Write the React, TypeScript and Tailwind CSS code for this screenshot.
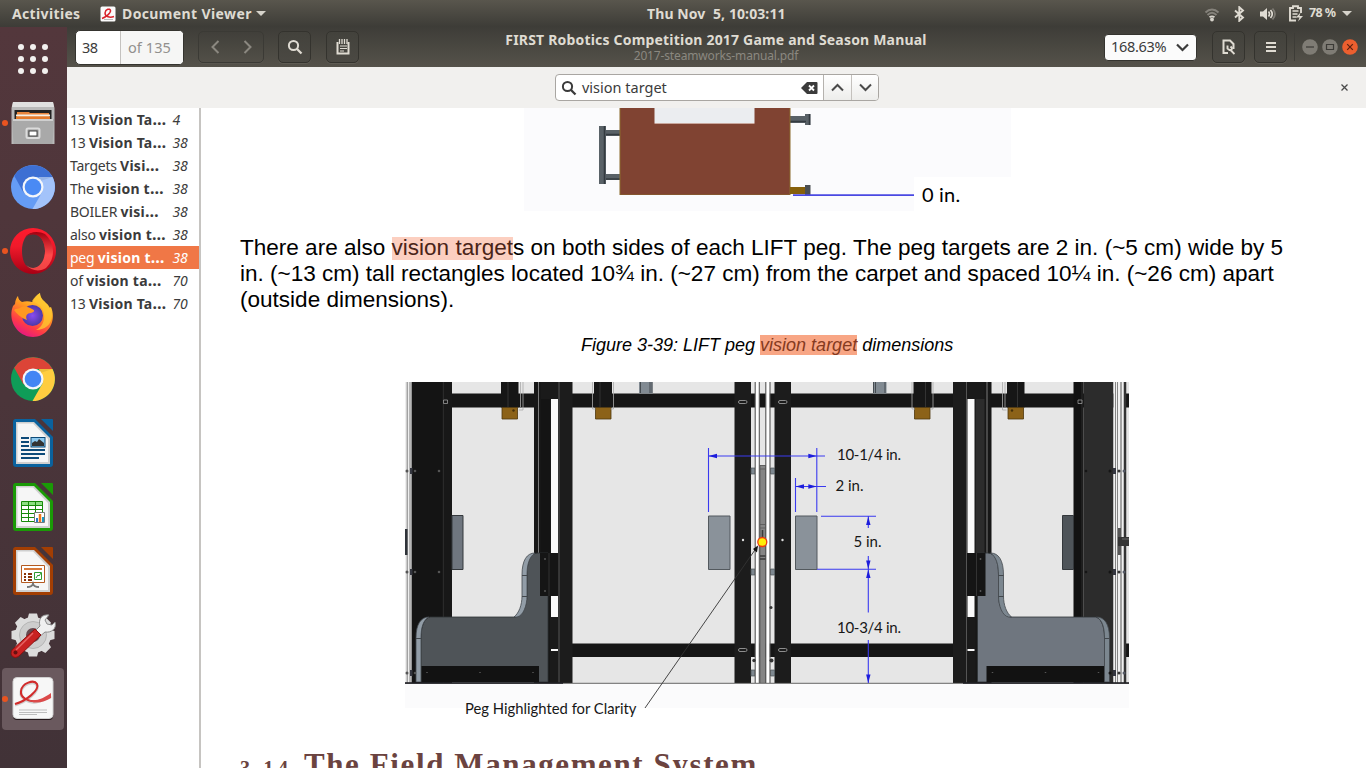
import React from "react";

const UI = "font-['Noto_Sans','Open_Sans',sans-serif]";

function Caret() {
  return (
    <svg width="10" height="5" viewBox="0 0 10 5">
      <path d="M0 0h10L5 5z" fill="#d6d3cb" />
    </svg>
  );
}

function Swirl() {
  return (
    <g fill="none">
      <path d="M3 28C14 25 28 14 25 8 22 3 10 7 9 15c-1 7 8 11 15 10 6-1 10-3 15-6" stroke="#cfcfcf" strokeWidth="3" />
      <path d="M3 27C14 24 28 13 25 7 22 2 10 6 9 14c-1 7 8 11 15 10" stroke="#d22b2b" strokeWidth="2" />
      <path d="M14 21c7 5 17 1 25-5v5c-8 5-19 7-25 0z" fill="#dc4a4a" />
    </g>
  );
}

function TopBar() {
  return (
    <div className="flex h-[27px] shrink-0 items-center bg-linear-to-b from-[#59564d] to-[#3d3c37] text-[14px] font-bold text-[#dfdbd2]">
      <div className="w-[100px] pl-3 tracking-[0.350px]">Activities</div>
      <svg width="16" height="16" viewBox="0 0 16 16">
        <rect x="0.5" y="0.5" width="15" height="15" rx="1.5" fill="#fbfbfb" />
        <path d="M2 12.500C6 11 11 7 10.500 4.500 10 2 5.500 3 5 7c0 4 5 5 9 3.500" fill="none" stroke="#d8222a" strokeWidth="1.500" />
        <path d="M4 13.500h9" stroke="#bbb" />
      </svg>
      <div className="w-[134px] pl-[6px] whitespace-nowrap tracking-[0.380px]">Document Viewer</div>
      <div className="pl-[6px]">
        <Caret />
      </div>
      <div className="flex-1 pl-[381px] whitespace-pre tracking-[0.100px]">Thu Nov  5, 10:03:11</div>
      <svg width="16" height="16" viewBox="0 0 16 16" className="mr-[11px]" fill="none" strokeWidth="1.900">
        <path d="M1.500 6.500c4-4 9-4 13 0" stroke="#85827b" />
        <path d="M3.500 9c3-3 6-3 9 0" stroke="#85827b" />
        <path d="M5.500 11.300c2-1.500 3-1.500 5 0" stroke="#d6d3cb" />
        <circle cx="8" cy="13.500" r="1.900" fill="#d6d3cb" />
      </svg>
      <svg width="16" height="16" viewBox="0 0 16 16" className="mr-3" fill="none" stroke="#dfdbd2" strokeWidth="1.900">
        <path d="M4 4.500l8 7L8.300 14.800V1.200L12 4.500 4 11.500" />
      </svg>
      <svg width="17" height="16" viewBox="0 0 17 16" className="mr-3" fill="none" strokeWidth="1.700">
        <path d="M1 5.500h3L8 2v12L4 10.500H1z" fill="#dfdbd2" />
        <path d="M9.500 5.500q2 2.500 0 5M11.500 4q3.500 4 0 8" stroke="#dfdbd2" />
        <path d="M13.500 2.500q5 5.500 0 11" stroke="#7d7a73" />
      </svg>
      <svg width="16" height="17" viewBox="0 0 16 17" className="mr-[5px]" fill="none" stroke="#dfdbd2" strokeWidth="1.900">
        <path d="M13 8V3H10V1.300H5V3H2v12.500h6" />
        <path d="M4.500 6h6M4.500 9h5M4.500 12h4" strokeWidth="1.600" />
        <path d="M12.500 7.500l-4.500 5h3.500L10 16.500l5-5.500h-3.500z" fill="#dfdbd2" stroke="none" />
      </svg>
      <div className="w-[33px] whitespace-nowrap text-[12.500px] tracking-[-0.6px]">78 %</div>
      <div className="mr-[14px]">
        <Caret />
      </div>
    </div>
  );
}

function FilesIcon() {
  return (
    <svg width="46" height="46" viewBox="0 0 46 46">
      <path d="M3 2h40l1.500 6v36h-43V8z" fill="#b9b9b9" />
      <path d="M3 2h40l1 5H2z" fill="#e0e0e0" />
      <path d="M4.500 10h37v10h-37z" fill="#222" />
      <path d="M7 12h12l1 1h19v6H7z" fill="#e8853c" />
      <path d="M6 14.500h34v2H6z" fill="#f4f0e6" />
      <path d="M6 16.500h34v3H6z" fill="#e37a2b" />
      <path d="M2 19h42l-1.500 25h-39z" fill="#a9a9a9" />
      <path d="M3 19h40v2H3z" fill="#cfcfcf" />
      <rect x="16.500" y="28.500" width="13" height="9.500" rx="1.500" fill="#999" stroke="#dcdcdc" strokeWidth="2" />
      <rect x="19" y="31" width="8" height="5" fill="#fff" stroke="#444" />
    </svg>
  );
}

function ChromeIcon({ a, b, c, mid }: { a: string; b: string; c: string; mid: string }) {
  return (
    <svg width="46" height="46" viewBox="0 0 46 46">
      <circle cx="23" cy="23" r="22" fill={b} />
      <path d="M4.200 11.700A22 22 0 0 1 42.500 13H23L13.500 28.500z" fill={a} />
      <path d="M42.500 13A22 22 0 0 1 22.500 45L32.500 27.500 29 13z" fill={c} />
      <path d="M29 13h13.500l-12 4z" fill="#000" opacity=".08" />
      <circle cx="23" cy="23" r="10.500" fill="#f4f6fa" />
      <circle cx="23" cy="23" r="8.300" fill={mid} />
    </svg>
  );
}

function OperaIcon() {
  return (
    <svg width="46" height="46" viewBox="0 0 46 46">
      <defs>
        <linearGradient id="op" x1="0" y1="0" x2="0" y2="1">
          <stop offset="0" stopColor="#ff1b2d" />
          <stop offset=".4" stopColor="#f01a2b" />
          <stop offset="1" stopColor="#a70014" />
        </linearGradient>
        <linearGradient id="op2" x1="0" y1="0" x2="0" y2="1">
          <stop offset="0" stopColor="#a20010" />
          <stop offset=".6" stopColor="#ff4b4b" />
          <stop offset="1" stopColor="#f04444" />
        </linearGradient>
      </defs>
      <path fillRule="evenodd" d="M23 0a23 23 0 1 0 0 46 23 23 0 0 0 0-46zm0 5c7 0 12 8 12 18s-5 18-12 18-11-8-11-18S16 5 23 5z" fill="url(#op)" />
      <path d="M15 9c5-6 14-6 20-3a23 23 0 0 1 1 34c-6 4-15 3-20-3 10 8 19-2 19-14S27 2 15 9z" fill="url(#op2)" />
    </svg>
  );
}

function FirefoxIcon() {
  return (
    <svg width="46" height="46" viewBox="0 0 46 46">
      <defs>
        <linearGradient id="ff" x1=".8" y1="0" x2=".3" y2="1">
          <stop offset="0" stopColor="#fff44f" />
          <stop offset=".4" stopColor="#ff9a1f" />
          <stop offset=".75" stopColor="#ff3b47" />
          <stop offset="1" stopColor="#e31587" />
        </linearGradient>
        <radialGradient id="ffc">
          <stop offset="0" stopColor="#8a4bf0" />
          <stop offset="1" stopColor="#4b39a8" />
        </radialGradient>
      </defs>
      <path d="M5 12c0-4 2-7 3-8 0 3 2 5 4 6 3-1 7-1 10 0 2-2 3-6 8-9 0 6 4 8 7 11 1 1 2 2 2 4l2-1c6 14-3 30-18 30C8 45-3 29 3 14z" fill="url(#ff)" />
      <circle cx="22.500" cy="23.500" r="10.500" fill="url(#ffc)" />
      <path d="M10 16c4-3 8-1 12 1 3 1 3 3-1 4-4 0-6 3-4 7-6-2-10-6-13-10 2-2 4-1 6-2z" fill="#ff9820" />
      <path d="M22 9c2-3 4-6 8-8 0 9 12 10 12 22 0 10-8 15-16 15 6-3 9-9 8-16-1-7-6-11-12-13z" fill="#ffc52f" opacity=".8" />
    </svg>
  );
}

function OfficeIcon({ color, children }: { color: string; children: React.ReactNode }) {
  return (
    <svg width="42" height="48" viewBox="0 0 42 48">
      <path d="M3 0h20l18 18v27a3 3 0 0 1-3 3H4a3 3 0 0 1-3-3V3a3 3 0 0 1 2-3z" fill={color} />
      <path d="M4 3h18l16 16v26H4z" fill="#cfcfcf" />
      <path d="M5.500 4.500H21L36 20v23H5.500z" fill="#f6f6f6" />
      <path d="M29 0h11q1 0 1 1v11z" fill={color} />
      {children}
    </svg>
  );
}

function SettingsIcon() {
  const teeth = [0, 45, 90, 135, 180, 225, 270, 315];
  return (
    <svg width="46" height="46" viewBox="0 0 46 46">
      {teeth.map((t) => (
        <path key={t} d="M17.500 7l1.500-5.500h8L28.500 7z" fill="#dcdcdc" transform={`rotate(${t} 23 23)`} />
      ))}
      <circle cx="23" cy="23" r="18" fill="#dcdcdc" />
      <circle cx="23" cy="23" r="13.500" fill="#cdcdcd" stroke="#b5b5b5" />
      <circle cx="23" cy="23" r="7" fill="#654950" />
      <path d="M24 20l6-6c-2-7 2-12 9-11l-4 5 2 4 5 1 3-3c2 7-4 11-10 10l-7 6z" fill="#f0f0f0" stroke="#8c8c8c" />
      <path d="M25 17l6 6L9 44c-5 4-10-1-7-6z" fill="#c82222" stroke="#8e1010" />
      <path d="M23 21L6 38" stroke="#e86464" strokeWidth="1.500" />
      <circle cx="5.500" cy="40.500" r="2" fill="#611" />
    </svg>
  );
}

function EvinceIcon() {
  return (
    <svg width="42" height="44" viewBox="0 0 42 44">
      <rect x="1" y="2" width="40" height="41" rx="4" fill="#26191c" />
      <rect x="1" y="0.500" width="40" height="41" rx="4" fill="#f7f7f7" stroke="#d0d0d0" />
      <Swirl />
      <path d="M7 33h28M7 35.500h28M7 37.500h18" stroke="#bdbdbd" />
    </svg>
  );
}

function DockItem({ running, active, children }: { running?: boolean; active?: boolean; children: React.ReactNode }) {
  return (
    <div className="relative flex h-16 w-[67px] items-center justify-center">
      {active && <div className="absolute top-[1px] left-[2px] h-[62px] w-[62px] rounded-[4px] bg-[#6a595e]" />}
      {running && <div className="absolute top-[29px] left-[2px] h-[6px] w-[6px] rounded-full bg-[#e95420]" />}
      <div className="relative -left-[0.5px]">{children}</div>
    </div>
  );
}

function Dock() {
  return (
    <div className="w-[67px] shrink-0 bg-linear-to-b from-[#53373c] via-[#4b353a] to-[#413237]">
      <div className="grid grid-cols-[repeat(3,6px)] gap-[6px] pt-[17px] pl-[18px]">
        {[0, 1, 2, 3, 4, 5, 6, 7, 8].map((n) => (
          <div key={n} className="h-[6px] w-[6px] rounded-full bg-[#f2f1ef]" />
        ))}
      </div>
      <div className="mt-[17px] flex flex-col">
        <DockItem running><FilesIcon /></DockItem>
        <DockItem><ChromeIcon a="#3d6fd3" b="#659cf5" c="#a3c3fa" mid="#4a8af4" /></DockItem>
        <DockItem running><OperaIcon /></DockItem>
        <DockItem><FirefoxIcon /></DockItem>
        <DockItem><ChromeIcon a="#dc4437" b="#0f9d58" c="#ffcd40" mid="#4285f4" /></DockItem>
        <DockItem>
          <OfficeIcon color="#0a629e">
            <path d="M9 19h8M9 23h8M9 27h8M9 31h24M9 35h24M9 39h18" stroke="#0d4a78" strokeWidth="2" />
            <rect x="19" y="18.500" width="14" height="9.500" fill="#8cc8ee" stroke="#0d4a78" />
            <path d="M20 27v-3l3-2 2 1 2-3 5 4v3z" fill="#333" />
          </OfficeIcon>
        </DockItem>
        <DockItem>
          <OfficeIcon color="#1a9a06">
            <path d="M9.500 18.500h21v20h-21z" fill="#fff" stroke="#178a0a" />
            <path d="M10 19h20v3H10z" fill="#8dde82" />
            <path d="M9 22.500h21M9 26.500h21M9 30.500h21M9 34.500h21M16.500 18v20M23.500 18v20" stroke="#178a0a" />
            <path d="M22.500 29.500h10v10h-10z" fill="#fff" stroke="#777" />
            <path d="M25 39v-4" stroke="#2878c8" strokeWidth="2" />
            <path d="M28 39v-8" stroke="#f07818" strokeWidth="2.500" />
            <path d="M31 39v-5" stroke="#1898c8" strokeWidth="2" />
          </OfficeIcon>
        </DockItem>
        <DockItem>
          <OfficeIcon color="#a33e03">
            <path d="M9.500 18.500h23v17h-23z" fill="#fff" stroke="#b45a20" />
            <path d="M12 22h18" stroke="#d87838" strokeWidth="2" />
            <path d="M12 27h2M12 30h2M12 33h2M16 27h4M16 30h4M16 33h4" stroke="#8a3508" strokeWidth="2" />
            <path d="M22.500 25.500h7v7h-7z" fill="#fff" stroke="#2e9a2e" />
            <path d="M24 31l2-3 1 1 2-3" fill="none" stroke="#2e9a2e" />
            <path d="M21 36v2M15 40q5 0 6-3 1 3 6 3" fill="none" stroke="#777" strokeWidth="2" />
          </OfficeIcon>
        </DockItem>
        <DockItem><SettingsIcon /></DockItem>
        <DockItem running active><EvinceIcon /></DockItem>
      </div>
    </div>
  );
}

function ToolButton({ children, className }: { children: React.ReactNode; className?: string }) {
  return (
    <div className={"flex h-[32px] w-[33px] items-center justify-center rounded-[5px] border border-[#34332e] bg-linear-to-b from-[#43423c] to-[#4b4943] shadow-[0_1px_0_#5f5c54] " + (className ?? "")}>
      {children}
    </div>
  );
}

function SearchIcon({ color }: { color: string }) {
  return (
    <svg width="16" height="16" viewBox="0 0 16 16" fill="none" stroke={color} strokeWidth="2">
      <circle cx="6.500" cy="6.500" r="4.600" />
      <path d="M9.800 9.800l4.700 4.700" strokeWidth="2.300" />
    </svg>
  );
}

function WinButton({ close, children }: { close?: boolean; children: React.ReactNode }) {
  return (
    <svg width="16" height="16" viewBox="0 0 16 16" fill="none" stroke={close ? "#5a2010" : "#3b3a36"} strokeWidth="1.200">
      <circle cx="8" cy="8" r="7.800" fill={close ? "#ec5f2f" : "#7f7c75"} stroke="none" />
      {children}
    </svg>
  );
}

function HeaderBar() {
  return (
    <div className="flex h-10 shrink-0 items-center bg-linear-to-b from-[#3e3d38] to-[#55524a]">
      <div className="ml-[8px] flex h-[35px] w-[109px] overflow-hidden rounded-[5px] border border-[#35342f] bg-white text-[14.500px] leading-[32px] text-[#3b3b3b]">
        <div className="w-[45px] border-r border-[#c4c2bf] pl-[6px] tracking-[-0.5px]">38</div>
        <div className="flex-1 bg-[#f6f6f5] pl-[7px] whitespace-nowrap tracking-[0.100px] text-[#92908d]">of 135</div>
      </div>
      <div className="ml-[14px] flex h-[32px] w-[66px] items-center justify-around rounded-[5px] border border-[#3b3a35] shadow-[0_1px_0_#59564f]">
        <svg width="9" height="14" viewBox="0 0 9 14" fill="none" stroke="#8b8880" strokeWidth="2"><path d="M7.500 1L1.500 7l6 6" /></svg>
        <svg width="9" height="14" viewBox="0 0 9 14" fill="none" stroke="#8b8880" strokeWidth="2"><path d="M1.500 1l6 6-6 6" /></svg>
      </div>
      <ToolButton className="ml-[14px]"><SearchIcon color="#dfdbd2" /></ToolButton>
      <ToolButton className="ml-[15px]">
        <svg width="14" height="16" viewBox="0 0 14 16" fill="none" stroke="#dfdbd2">
          <path d="M1.500 3v11.500h11V3" strokeWidth="2" />
          <path d="M3.500 0v5M6 0v5M8.500 0v5M11 0v5" strokeWidth="1.300" />
          <path d="M4 7h7M4 9.500h7M4 12h4" strokeWidth="1.200" />
        </svg>
      </ToolButton>
      <div className="flex flex-1 flex-col items-center pr-[31px] whitespace-nowrap">
        <div className="text-[14px] leading-[18px] font-bold tracking-[0.190px] text-[#dfdbd2]">FIRST Robotics Competition 2017 Game and Season Manual</div>
        <div className="text-[12px] leading-[14px] tracking-[-0.150px] text-[#8b8880]">2017-steamworks-manual.pdf</div>
      </div>
      <div className="mr-[15px] flex h-[27px] w-[93px] items-center rounded-[4px] border border-[#35342f] bg-[#fbfbfb] pl-[6px] text-[14.500px] tracking-[-0.3px] text-[#3b3b3b]">
        <span className="w-[65px]">168.63%</span>
        <svg width="13" height="9" viewBox="0 0 13 9" fill="none" stroke="#3b3b3b" strokeWidth="2.200"><path d="M1 1.500l5.500 5.500L12 1.500" /></svg>
      </div>
      <ToolButton>
        <svg width="13" height="16" viewBox="0 0 13 16" fill="none" stroke="#dfdbd2" strokeWidth="2">
          <path d="M6 14H1.500V1.500H8L11.500 5v5" />
          <path d="M5.500 6.500v3l2 1.500h2L10 9 8.500 7.500M8.500 11l4 4" strokeWidth="1.900" />
        </svg>
      </ToolButton>
      <ToolButton className="ml-[9px]">
        <svg width="10" height="10" viewBox="0 0 10 10"><path d="M0 1h10M0 5h10M0 9h10" stroke="#dfdbd2" strokeWidth="2" /></svg>
      </ToolButton>
      <div className="ml-[7px] h-7 w-px bg-[#3d3c37]" />
      <div className="mr-2 ml-[7px] flex gap-1">
        <WinButton><path d="M4 8h8" /></WinButton>
        <WinButton><path d="M4.500 5.500h7v5h-7z" /></WinButton>
        <WinButton close><path d="M5.200 5.200l5.600 5.600M10.800 5.200l-5.600 5.600" /></WinButton>
      </div>
    </div>
  );
}

function FindBar() {
  return (
    <div className="flex h-[41px] shrink-0 items-center bg-[#f1f0ee]">
      <div className="ml-[488px] flex h-[27px] w-[324px] overflow-hidden rounded-[4px] border border-[#a9a6a2] bg-white">
        <div className="flex flex-1 items-center gap-[5px] pl-[5px] text-[14.500px] text-[#3b3b3b]">
          <SearchIcon color="#3b3b3b" />
          <span className="flex-1 tracking-[0px]">vision target</span>
          <svg width="17" height="12" viewBox="0 0 17 12" className="mr-[5px]">
            <path d="M6 0h9.500q1 0 1 1v10q0 1-1 1H6L0 6z" fill="#3b3b3b" />
            <path d="M8 3.500l5 5M13 3.500l-5 5" stroke="#fff" strokeWidth="1.800" />
          </svg>
        </div>
        <div className="flex w-[28px] items-center justify-center border-l border-[#b5b2ae] bg-linear-to-b from-white to-[#ededeb]">
          <svg width="13" height="9" viewBox="0 0 13 9" fill="none" stroke="#4a4a4a" strokeWidth="2"><path d="M1 7.500L6.500 2 12 7.500" /></svg>
        </div>
        <div className="flex w-[27px] items-center justify-center border-l border-[#c4c1bd] bg-linear-to-b from-white to-[#ededeb]">
          <svg width="13" height="9" viewBox="0 0 13 9" fill="none" stroke="#4a4a4a" strokeWidth="2"><path d="M1 1.500L6.500 7 12 1.500" /></svg>
        </div>
      </div>
      <svg width="7" height="7" viewBox="0 0 7 7" className="mr-[18px] ml-auto"><path d="M.5.500l6 6M6.500.500l-6 6" stroke="#4a4a4a" strokeWidth="1.300" /></svg>
    </div>
  );
}

const results = [
  { pre: "13 ", match: "Vision Ta…", page: "4" },
  { pre: "13 ", match: "Vision Ta…", page: "38" },
  { pre: "Targets ", match: "Visi…", page: "38" },
  { pre: "The ", match: "vision t…", page: "38" },
  { pre: "BOILER ", match: "visi…", page: "38" },
  { pre: "also ", match: "vision t…", page: "38" },
  { pre: "peg ", match: "vision t…", page: "38", selected: true },
  { pre: "of ", match: "vision ta…", page: "70" },
  { pre: "13 ", match: "Vision Ta…", page: "70" },
];

function ResultList() {
  return (
    <div className="w-[134px] shrink-0 border-r-2 border-[#c6c4c1] bg-white text-[14px] tracking-[-0.250px] text-[#3b3b3b]">
      {results.map((r, i) => (
        <div key={i} className={"flex h-[23px] items-center pl-[3px] leading-[23px] whitespace-pre " + (r.selected ? "bg-[#f07746] text-white" : "")}>
          <div className="w-[102.500px] shrink-0">
            {r.pre}
            <b className="tracking-[0.250px]">{r.match.slice(0, -1)}<span className="text-[16px]">…</span></b>
          </div>
          <i>{r.page}</i>
        </div>
      ))}
    </div>
  );
}

function TowerFigure() {
  return (
    <svg width="487" height="103" viewBox="524 108 487 103" className="ml-[323px] block shrink-0">
      <path d="M524 108h487v69h-97v34H524z" fill="#fbfbfd" />
      <g fill="#596167">
        <path d="M599 126h7v58h-7zM606 130h14v6h-14zM606 174h14v6h-14zM790 116h16v7h-16zM805 114h5.500v11H805z" />
      </g>
      <path d="M604.500 126v58M606 134.500h14M606 179h14M790 121.500h16M809.500 114v11" stroke="#343b40" strokeWidth="1.500" />
      <path d="M619.500 108h171v87h-171z" fill="#8a6a2c" />
      <path d="M620.500 108h169v86.500h-169z" fill="#804332" />
      <path d="M654.500 108h92v0h8v15h-100z" fill="#ebedf0" />
      <path d="M654.500 123.500h100" stroke="#c9a79d" />
      <path d="M790 187h16v7h-16z" fill="#86600c" />
      <path d="M805 185h5.500v10H805z" fill="#4b4f53" />
      <path d="M793 195.200h121" stroke="#4a49e2" strokeWidth="1.700" />
    </svg>
  );
}

function Wing({ post, edge, bumper, rim, plate }: { post: string; edge: string; bumper: string; rim: string; plate: string }) {
  return (
    <g>
      <path d="M412 382h30v301h-30z" fill={post} />
      <path d="M442 382h10v301h-10z" fill={edge} />
      <path d="M443.500 382v301" stroke="#2a2a2a" />
      <path d="M443.500 400h4v3.500h-4z" fill="none" stroke="#999" strokeWidth=".8" />
      <path d="M452 515.500h11v54h-11z" fill={plate} stroke="#34383c" />
      <path d="M534 382h17v301h-17z" fill="#171717" />
      <path d="M541 399h9v154h-9z" fill={post} />
      <path d="M538.500 382v171" stroke="#7a7a7a" />
      <path d="M541 382h18v301h-9V399h-9z" fill="#1a1a1a" />
      <path d="M551 399h7v154h-7zM551 596h7v21h-7zM551 649h7v2h-7z" fill="#fafafa" />
      <path d="M501 382h17.500v25.500H501z" fill="#161616" />
      <path d="M508 382v25" stroke="#333" />
      <path d="M502 407.500h15.500V419H502z" fill="#8c6218" stroke="#4e370c" strokeWidth=".8" />
      <circle cx="513.500" cy="410.500" r="1.200" fill="#46300a" />
      <path d="M520.500 382v25M523 382v28h-4" fill="none" stroke="#aaa" strokeWidth=".8" />
      <path d="M421 682V638C421 625 425 618 430 617H515C523 615 527 605 527 595V575C527 562 530 553 538 553H548V682z" fill={bumper} stroke="#2f3336" strokeWidth=".8" />
      <path d="M416 682V638C416 624 421 617 429 617 423 620 421 628 421 638V682z" fill={rim} stroke="#42474c" strokeWidth=".8" />
      <path d="M514 617C519 613 522 605 522 596V575C522 560 527 553 535 553 529 557 527 565 527 575V596C527 606 523 616 517 617z" fill={rim} stroke="#42474c" strokeWidth=".8" />
      <path d="M416 638.500h5M522 575.500h5M522 596.500h5" stroke="#42474c" />
      <path d="M540 553h18.500v43H540z" fill="#151515" />
      <path d="M549 553v43" stroke="#333" />
      <path d="M421.500 666H539v16H421.500z" fill="#121212" />
      <path d="M427 672v1M480 672v1M533 672v1M545 558v2M545 590v2" stroke="#555" strokeWidth="1.500" />
      <path d="M559 382h13.500v301H559z" fill="#1c1c1c" />
      <path d="M559 382v301" stroke="#555" />
      <path d="M594 382h18v25.500h-18z" fill="#171717" />
      <path d="M600 382v25" stroke="#333" />
      <path d="M595.500 407.500H611V419h-15.500z" fill="#8c6218" stroke="#4e370c" strokeWidth=".8" />
      <path d="M592.500 382v27h3M613.500 382v27h-3" fill="none" stroke="#aaa" strokeWidth=".8" />
      <path d="M639 382h13.500v11.500H639z" fill="#818a92" />
      <path d="M640.500 382v11M650 382v11M652 382v11" stroke="#454b50" />
      <path d="M734.500 382H751v301h-16.500z" fill="#1c1c1c" />
      <rect x="738.500" y="400.500" width="8.500" height="3" rx="1.500" fill="none" stroke="#8d8d8d" />
      <rect x="738.500" y="648.500" width="8.500" height="3" rx="1.500" fill="none" stroke="#8d8d8d" />
      <circle cx="743" cy="540" r="1.200" fill="#ddd" />
      <path d="M751 468h4v6h-4zM751 569h4v6h-4zM751 670h4v6h-4z" fill="#7e8890" stroke="#4b5358" strokeWidth=".7" />
    </g>
  );
}

function Arrow({ x, y, r }: { x: number; y: number; r: number }) {
  return <path d="M0 0l-8.500-2.200v4.400z" fill="#1d1ddc" transform={`translate(${x} ${y}) rotate(${r})`} />;
}

const screws = [471, 572, 673];

function PegFigure() {
  return (
    <svg width="735" height="345" viewBox="400 375 735 345" className="ml-[199px] block shrink-0">
      <path d="M405 382h724v326H405z" fill="#fbfbfc" />
      <path d="M412 382h717v301H412z" fill="#e6e6e6" />
      <path d="M405 382h7v301h-7z" fill="#eee" />
      <path d="M407.200 382v301M410 382v301M411.700 382v301" stroke="#737373" strokeWidth=".9" />
      <path d="M405 529h2.500v26H405z" fill="#30343a" />
      <path d="M452 393.500h677v14H452zM572 643.500h381v13.500H572zM1125 643.500h4v13.500h-4z" fill="#161616" />
      <Wing post="#141414" edge="#181818" bumper="#4f5458" rim="#929da7" plate="#6f767f" />
      <g transform="translate(1525.500 0) scale(-1 1)">
        <Wing post="#2c2c2c" edge="#121212" bumper="#6f767f" rim="#7c8790" plate="#4e5459" />
      </g>
      <path d="M1113.500 382h11.500v301h-11.500z" fill="#f1f1f1" />
      <path d="M1115.500 382v301M1117.500 382v301" stroke="#858585" />
      <path d="M1121 382v301" stroke="#a3a3a3" strokeWidth="2" />
      <path d="M1125 382v301" stroke="#333" strokeWidth="2.500" />
      <path d="M1118 528h3v27h-3z" fill="#555" />
      <path d="M1118 537h11v9h-11z" fill="#343434" />
      <path d="M1122 539h7" stroke="#666" />
      {screws.map((y) => (
        <g key={y}>
          <path d={`M410 ${y - 3}h2.500v6h-2.500zM1113 ${y - 3}h3v6h-3z`} fill="#34363f" />
          <circle cx="407" cy={y} r="1.500" fill="#555" />
          <circle cx="415" cy={y} r="1.300" fill="#555" />
          <circle cx="439" cy={y} r="1.300" fill={y > 600 ? "none" : "#555"} />
          <circle cx="1086" cy={y} r="1.300" fill={y > 600 ? "none" : "#151515"} />
          <circle cx="1110" cy={y} r="1.500" fill="#151515" />
          <circle cx="1119" cy={y} r="1.500" fill="#333" />
          <circle cx="1124" cy={y} r="1.500" fill="#555a66" />
        </g>
      ))}
      <path d="M755 382h4.500v301H755zM765.800 382h4v301h-4z" fill="#fff" />
      <path d="M760 465h5.500v218H760z" fill="#858585" />
      <path d="M755.200 382v301M759.300 382v301M765.800 382v301M770 382v301" stroke="#555" strokeWidth="1.100" />
      <path d="M760 465v218M765.500 465v218M760 465.500h5.500M760 469h5.500M760 524.500h5.500M760 528h5.500" stroke="#555" strokeWidth=".8" />
      <path d="M762.500 530v10M760 556h5.500M760 559h5.500" stroke="#3a3a3a" strokeWidth="1.500" />
      <circle cx="754" cy="660.500" r="1.700" fill="#333" />
      <circle cx="771.500" cy="660.500" r="2" fill="#333" />
      <circle cx="771" cy="607.500" r="1.500" fill="#333" />
      <path d="M708.500 516H730v53.500h-21.500zM795.500 516H817v53.500h-21.500z" fill="#8a929a" stroke="#53595e" />
      <path d="M405 683.300h724" stroke="#555" strokeWidth=".9" />
      <path d="M405 683h158M963 683h166" stroke="#1c1d22" strokeWidth="1.500" />
      <g stroke="#3a3af0" strokeWidth="1.100" fill="none">
        <path d="M708.500 448v64M816.800 448v64M795.500 478v34M708.500 456H825M795.500 486.500H826M821 516.300h55M817 569.300h59M868.300 516v12M868.300 556v56.500M868.300 640v43" />
      </g>
      <Arrow x={708.5} y={456} r={180} />
      <Arrow x={816.8} y={456} r={0} />
      <Arrow x={795.5} y={486.5} r={180} />
      <Arrow x={816.8} y={486.5} r={0} />
      <Arrow x={868.3} y={516.5} r={-90} />
      <Arrow x={868.3} y={569} r={90} />
      <Arrow x={868.3} y={569.5} r={-90} />
      <Arrow x={868.3} y={683} r={90} />
      <path d="M645 708L757 547" stroke="#333" strokeWidth=".9" />
      <path d="M758 545.500l-5 3.500 4 3.500z" fill="#111" />
      <circle cx="762.300" cy="542" r="4.500" fill="#ffee08" stroke="#ee3a10" strokeWidth="1.300" />
      <g className="font-['Lato',sans-serif]" fontSize="15" fill="#171717">
        <text x="837" y="460" textLength="64">10-1/4 in.</text>
        <text x="835.500" y="491" textLength="28">2 in.</text>
        <text x="853.500" y="547" textLength="28">5 in.</text>
        <text x="837" y="632.500" textLength="64">10-3/4 in.</text>
        <text x="465" y="713.500" textLength="171.500" lengthAdjust="spacingAndGlyphs">Peg Highlighted for Clarity</text>
      </g>
    </svg>
  );
}

function DocumentPage() {
  return (
    <div className="flex flex-1 flex-col overflow-hidden bg-white font-['Liberation_Sans',sans-serif] text-black">
      <div className="flex">
        <TowerFigure />
        <div className="-ml-[89px] pt-[72px] font-['Lato',sans-serif] text-[20px] leading-[28px] tracking-[0.200px]">0 in.</div>
      </div>
      <p className="mt-[24px] ml-[39px] text-[22.540px] leading-[26px] whitespace-nowrap">
        There are also <span className="bg-linear-to-b from-transparent from-[2px] to-transparent [background:linear-gradient(#fccfc0,#fccfc0)_0_2px/100%_23px_no-repeat] text-[#4a2418]">vision target</span>s on both sides of each LIFT peg. The peg targets are 2 in. (~5 cm) wide by 5<br />
        in. (~13 cm) tall rectangles located 10¾ in. (~27 cm) from the carpet and spaced 10¼ in. (~26 cm) apart<br />
        (outside dimensions).
      </p>
      <p className="mt-[22px] ml-[380px] text-[18px] leading-[20px] whitespace-nowrap italic">
        Figure 3-39: LIFT peg <span className="bg-[#f8a685] text-[#853a20]">vision target</span> dimensions
      </p>
      <div className="mt-[20px]">
        <PegFigure />
      </div>
      <h2 className="mt-[27px] ml-[39px] shrink-0 font-['Liberation_Serif',serif] text-[31px] leading-[36px] font-bold tracking-[1.600px] whitespace-nowrap text-[#6b4340]">
        <span className="mr-[3px] text-[20px] tracking-[4.300px]">3.14</span> The Field Management System
      </h2>
    </div>
  );
}

export default function App() {
  return (
    <div className={"flex h-[768px] w-[1366px] flex-col overflow-hidden bg-white " + UI}>
      <TopBar />
      <div className="flex min-h-0 flex-1">
        <Dock />
        <div className="flex min-w-0 flex-1 flex-col">
          <HeaderBar />
          <FindBar />
          <div className="flex min-h-0 flex-1">
            <ResultList />
            <DocumentPage />
          </div>
        </div>
      </div>
    </div>
  );
}
